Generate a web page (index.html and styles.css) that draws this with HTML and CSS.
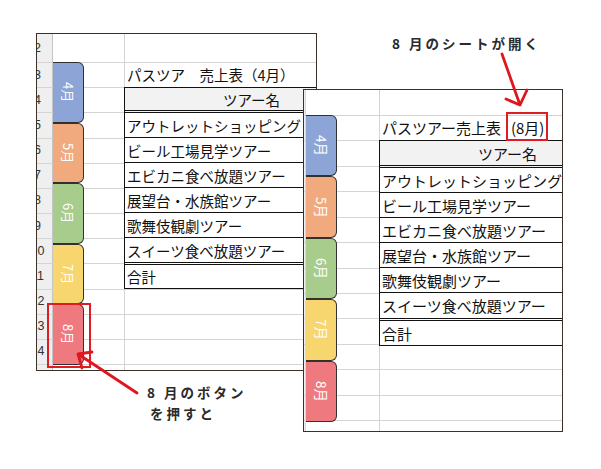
FILE: index.html
```html
<!DOCTYPE html>
<html lang="ja">
<head>
<meta charset="utf-8">
<title>8月のシートが開く</title>
<link rel="stylesheet" href="styles.css">
</head>
<body>
<div class="canvas">
  <section class="sheet sheet-left">
    <div class="rownums">
      <div class="num first">2</div>
      <div class="num">3</div>
      <div class="num">4</div>
      <div class="num">5</div>
      <div class="num">6</div>
      <div class="num">7</div>
      <div class="num">8</div>
      <div class="num">9</div>
      <div class="num">10</div>
      <div class="num">11</div>
      <div class="num">12</div>
      <div class="num">13</div>
      <div class="num">14</div>
      <div class="num">15</div>
    </div>
    <div class="lines"></div>
    <div class="col-a">
      <div class="tab t4"><span>4月</span></div>
      <div class="tab t5"><span>5月</span></div>
      <div class="tab t6"><span>6月</span></div>
      <div class="tab t7"><span>7月</span></div>
      <div class="tab t8 picked"><span>8月</span></div>
    </div>
    <div class="col-b">
      <div class="title">パスツア　売上表（4月）</div>
      <div class="tbl">
        <div class="tr th">ツアー名</div>
        <div class="tr">アウトレットショッピング</div>
        <div class="tr">ビール工場見学ツアー</div>
        <div class="tr">エビカニ食べ放題ツアー</div>
        <div class="tr">展望台・水族館ツアー</div>
        <div class="tr">歌舞伎観劇ツアー</div>
        <div class="tr dbl">スイーツ食べ放題ツアー</div>
        <div class="tr last">合計</div>
      </div>
    </div>
  </section>

  <section class="sheet sheet-right">
    <div class="rownums"></div>
    <div class="lines"></div>
    <div class="col-a">
      <div class="tab t4"><span>4月</span></div>
      <div class="tab t5"><span>5月</span></div>
      <div class="tab t6"><span>6月</span></div>
      <div class="tab t7"><span>7月</span></div>
      <div class="tab t8"><span>8月</span></div>
    </div>
    <div class="col-b">
      <div class="title">パスツアー売上表 <span class="hl">(8月)</span></div>
      <div class="tbl">
        <div class="tr th">ツアー名</div>
        <div class="tr">アウトレットショッピング</div>
        <div class="tr">ビール工場見学ツアー</div>
        <div class="tr">エビカニ食べ放題ツアー</div>
        <div class="tr">展望台・水族館ツアー</div>
        <div class="tr">歌舞伎観劇ツアー</div>
        <div class="tr dbl">スイーツ食べ放題ツアー</div>
        <div class="tr last">合計</div>
      </div>
    </div>
  </section>

  <p class="note note-top">8 月のシートが開く</p>
  <p class="note note-bottom">8 月のボタン<br><span class="indent">を押すと</span></p>

  <svg class="arrows" width="601" height="469" viewBox="0 0 601 469" aria-hidden="true">
    <g fill="none" stroke="#e0161f" stroke-width="2.8" stroke-linecap="round" stroke-linejoin="round">
      <path d="M502 54 L520 105 M506 99 L520 105 L527 90"/>
      <path d="M137 393 L78 354 M92 352 L78 354 L82 368"/>
    </g>
  </svg>
</div>
</body>
</html>
```
FILE: styles.css
```css
* { box-sizing: border-box; }
html, body { margin: 0; padding: 0; }
body {
  width: 601px;
  height: 469px;
  overflow: hidden;
  background: #fff;
  font-family: "Noto Sans CJK JP", "Noto Sans", sans-serif;
  color: #111;
}
.canvas { position: relative; width: 601px; height: 469px; }

/* spreadsheet windows */
.sheet {
  position: absolute;
  background: #fff;
  border: 1px solid #3a3129;
  overflow: hidden;
  display: grid;
}
.sheet-left {
  left: 36px; top: 33px; width: 281px; height: 338px;
  grid-template-columns: 16px 72px 1fr;
  grid-template-rows: 28px 1fr;
}
.sheet-right {
  left: 303px; top: 89px; width: 260px; height: 343px;
  grid-template-columns: 2px 74px 1fr;
  grid-template-rows: 25px 1fr;
}

.rownums {
  grid-column: 1; grid-row: 1 / -1;
  background: #efefef;
  border-right: 1px solid #c4c4c4;
  overflow: hidden;
  display: flex; flex-direction: column;
  font-family: "Liberation Sans", Arial, sans-serif;
  font-size: 12.5px;
  color: #333;
}
.sheet-right .rownums { border-right: 1px solid #d8d8d8; }
.num {
  width: 1px;
  height: 25.17px;
  flex: none;
  display: flex; justify-content: center; align-items: center;
  white-space: nowrap;
}
.num.first { height: 28px; }

.lines {
  grid-column: 1 / -1; grid-row: 2;
  background-image: repeating-linear-gradient(to bottom, #d4d4d4 0, #d4d4d4 1px, transparent 1px, transparent 25.17px);
}
.sheet-right .lines {
  background-image: repeating-linear-gradient(to bottom, #d4d4d4 0, #d4d4d4 1px, transparent 1px, transparent 25.42px);
}

.col-a {
  grid-column: 2; grid-row: 1 / -1;
  border-right: 1px solid #d4d4d4;
  display: flex; flex-direction: column; align-items: flex-start;
  padding-top: 28px;
}
.sheet-right .col-a { padding-top: 25px; }

.tab {
  position: relative;
  flex: none;
  width: 31px; height: 60.5px;
  border: 1px solid #343030;
  border-left: none;
  border-radius: 0 6px 6px 0;
  display: flex; align-items: center; justify-content: center;
  color: #fff;
  font-size: 13px;
}
.sheet-right .tab { height: 61.4px; font-size: 13.5px; }
.tab span { writing-mode: vertical-rl; text-orientation: sideways; line-height: 1; }
.t4 { background: #8da5d6; }
.t5 { background: #f0aa7e; }
.t6 { background: #a7cc8b; }
.t7 { background: #f7d56f; }
.t8 { background: #ee7a80; }
.picked::after {
  content: "";
  position: absolute;
  left: -6px; right: -8px; top: -2px; bottom: -4.5px;
  border: 2.7px solid #dd1c24;
}

.col-b {
  grid-column: 3; grid-row: 1 / -1;
  padding-top: 28px;
}
.sheet-right .col-b { padding-top: 25px; }

.title {
  height: 25px; line-height: 25px;
  padding-left: 2px;
  font-size: 14.5px;
  white-space: nowrap;
}
.sheet-right .title { font-size: 15px; }
.hl {
  border: 2.6px solid #dd1c24;
  padding: 3px 1.5px 1px 2.5px;
  margin-left: 2px;
}

.tbl {
  width: 252px;
  margin-left: -1px;
  background: #fff;
  border-left: 1px solid #111;
  border-top: 1px solid #111;
  font-size: 14.5px;
}
.sheet-right .tbl { width: 254px; font-size: 15px; }
.tr {
  height: 25px;
  border-bottom: 1px solid #111;
  padding-left: 2px;
  display: flex; align-items: center;
  white-space: nowrap;
  overflow: hidden;
}
.tr.th {
  height: 25px;
  border-bottom: 3px double #111;
  background: #f2f2f2;
  justify-content: center;
}
.tr.dbl { height: 27px; border-bottom: 3px double #111; }
.tr.last { height: 24px; }
.sheet-right .tr.th { height: 27px; }
.sheet-right .tr.dbl { height: 28px; }
.sheet-right .tr.last { height: 25px; }

/* annotations */
.note {
  position: absolute;
  margin: 0;
  font-weight: 700;
  font-size: 13.5px;
  letter-spacing: 3px;
  color: #2a2a2a;
  line-height: 16px;
  white-space: nowrap;
}
.note-top { left: 392px; top: 35px; }
.note-bottom { left: 147px; top: 382px; line-height: 21px; }
.indent { padding-left: 3px; }
.arrows { position: absolute; left: 0; top: 0; pointer-events: none; }
```
